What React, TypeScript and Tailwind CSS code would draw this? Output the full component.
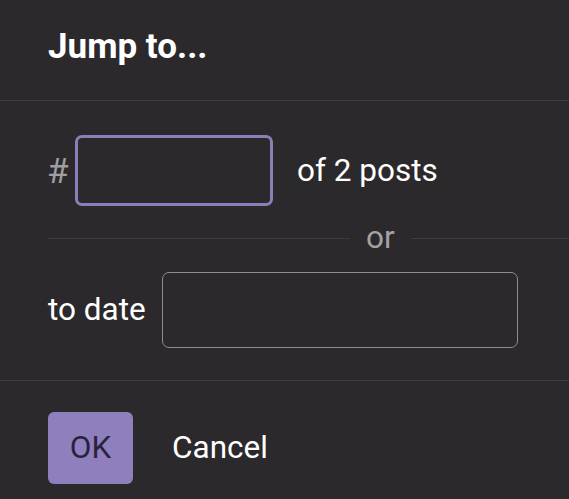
import React from 'react';

export default function App() {
  return (
    <div className="w-[569px] h-[499px] overflow-hidden bg-[#2b292b] font-['Roboto',sans-serif] text-white">
      <div className="h-[101px] px-[48px] pt-[24px] border-b border-[#3d3b3d]">
        <h1 className="text-[35px] leading-[46px] font-bold">Jump to...</h1>
      </div>

      <div className="pl-[48px] pt-[34px]">
        <div className="flex items-center h-[71px]">
          <span className="text-[35px] leading-none text-[#a09ea0] w-[27px] -ml-[1px] mr-[1px] pt-[2px]">#</span>
          <div className="w-[198px] h-[71px] rounded-[7px] border-[3px] border-[#8c7fb8]" />
          <span className="ml-[24px] text-[31.5px]">of 2 posts</span>
        </div>

        <div className="flex items-center mt-[12px] h-[40px]">
          <div className="w-[302px] h-px bg-[#3d3b3d]" />
          <span className="px-[16px] text-[31.5px] text-[#a3a1a3]">or</span>
          <div className="flex-1 h-px bg-[#3d3b3d]" />
        </div>

        <div className="flex items-center mt-[14px] h-[76px]">
          <span className="text-[31.5px] w-[114px]">to date</span>
          <div className="w-[356px] h-[76px] rounded-[7px] border border-[#8e8c8e]" />
        </div>
      </div>

      <div className="mt-[32px] border-t border-[#3d3b3d] px-[48px] pt-[31px] flex items-center">
        <button className="w-[85px] h-[72px] rounded-[6px] bg-[#8f80bd] text-[31.5px] text-[#2a2340]">OK</button>
        <button className="ml-[39px] text-[31.5px] text-white">Cancel</button>
      </div>
    </div>
  );
}
